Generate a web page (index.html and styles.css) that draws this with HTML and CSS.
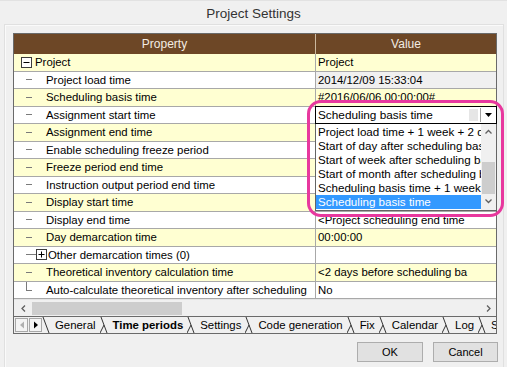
FILE: index.html
```html
<!DOCTYPE html>
<html lang="en">
<head>
    <meta charset="UTF-8">
    <title>Project Settings</title>
    <link rel="stylesheet" href="styles.css">
</head>
<body>
    <div class="titlebar">Project Settings</div>

    <div class="panel">
        <div class="grid">
            <div class="ghead">
                <div>Property</div>
                <div class="gsep">Value</div>
            </div>

            <div class="row alt">
                <div class="prop">
                    <svg class="box" width="11" height="11"><rect x="0.5" y="0.5" width="10" height="10" fill="#fff" stroke="#3c3c3c"/><line x1="2.5" y1="5.5" x2="8.5" y2="5.5" stroke="#000"/></svg>
                    <span>Project</span>
                </div>
                <div class="val">Project</div>
            </div>
            <div class="row">
                <div class="prop"><i class="dash"></i><span>Project load time</span></div>
                <div class="val ro">2014/12/09 15:33:04</div>
            </div>
            <div class="row alt">
                <div class="prop"><i class="dash"></i><span>Scheduling basis time</span></div>
                <div class="val">#2016/06/06 00:00:00#</div>
            </div>
            <div class="row">
                <div class="prop"><i class="dash"></i><span>Assignment start time</span></div>
                <div class="val"></div>
            </div>
            <div class="row alt">
                <div class="prop"><i class="dash"></i><span>Assignment end time</span></div>
                <div class="val"></div>
            </div>
            <div class="row">
                <div class="prop"><i class="dash"></i><span>Enable scheduling freeze period</span></div>
                <div class="val"></div>
            </div>
            <div class="row alt">
                <div class="prop"><i class="dash"></i><span>Freeze period end time</span></div>
                <div class="val"></div>
            </div>
            <div class="row">
                <div class="prop"><i class="dash"></i><span>Instruction output period end time</span></div>
                <div class="val"></div>
            </div>
            <div class="row alt">
                <div class="prop"><i class="dash"></i><span>Display start time</span></div>
                <div class="val"></div>
            </div>
            <div class="row">
                <div class="prop"><i class="dash"></i><span>Display end time</span></div>
                <div class="val">&lt;Project scheduling end time</div>
            </div>
            <div class="row alt">
                <div class="prop"><i class="dash"></i><span>Day demarcation time</span></div>
                <div class="val">00:00:00</div>
            </div>
            <div class="row">
                <div class="prop">
                    <i class="dash long"></i>
                    <svg class="box2" width="11" height="11"><rect x="0.5" y="0.5" width="10" height="10" fill="#fff" stroke="#3c3c3c"/><line x1="2.5" y1="5.5" x2="8.5" y2="5.5" stroke="#000"/><line x1="5.5" y1="2.5" x2="5.5" y2="8.5" stroke="#000"/></svg>
                    <span>Other demarcation times (0)</span>
                </div>
                <div class="val"></div>
            </div>
            <div class="row alt">
                <div class="prop"><i class="dash"></i><span>Theoretical inventory calculation time</span></div>
                <div class="val">&lt;2 days before scheduling ba</div>
            </div>
            <div class="row">
                <div class="prop"><i class="dash last"></i><span>Auto-calculate theoretical inventory after scheduling</span></div>
                <div class="val">No</div>
            </div>

            <div class="hscroll">
                <svg class="arr" width="16" height="15"><polyline points="9,4.5 6,7.5 9,10.5" fill="none" stroke="#606060" stroke-width="1.3"/></svg>
                <div class="thumb"></div>
                <div class="track"></div>
                <svg class="arr" width="16" height="15"><polyline points="7,4.5 10,7.5 7,10.5" fill="none" stroke="#606060" stroke-width="1.3"/></svg>
            </div>

            <div class="tabs">
                <span class="nav"><svg width="12" height="12"><polygon points="8,2.5 4,6 8,9.5" fill="#b0b0b0"/></svg></span>
                <span class="nav"><svg width="12" height="12"><polygon points="4,2.5 8,6 4,9.5" fill="#000"/></svg></span>
                <svg class="sep" width="8" height="16"><line x1="1" y1="0" x2="7" y2="16" stroke="#333"/></svg>
                <span class="tab">General</span>
                <svg class="sep" width="8" height="16"><line x1="1" y1="0" x2="7" y2="16" stroke="#333"/><line x1="0" y1="16" x2="4" y2="8" stroke="#333"/></svg>
                <span class="tab on">Time periods</span>
                <svg class="sep" width="8" height="16"><line x1="1" y1="0" x2="7" y2="16" stroke="#333"/><line x1="0" y1="16" x2="4" y2="8" stroke="#333"/></svg>
                <span class="tab">Settings</span>
                <svg class="sep" width="8" height="16"><line x1="1" y1="0" x2="7" y2="16" stroke="#333"/><line x1="0" y1="16" x2="4" y2="8" stroke="#333"/></svg>
                <span class="tab">Code generation</span>
                <svg class="sep" width="8" height="16"><line x1="1" y1="0" x2="7" y2="16" stroke="#333"/><line x1="0" y1="16" x2="4" y2="8" stroke="#333"/></svg>
                <span class="tab">Fix</span>
                <svg class="sep" width="8" height="16"><line x1="1" y1="0" x2="7" y2="16" stroke="#333"/><line x1="0" y1="16" x2="4" y2="8" stroke="#333"/></svg>
                <span class="tab">Calendar</span>
                <svg class="sep" width="8" height="16"><line x1="1" y1="0" x2="7" y2="16" stroke="#333"/><line x1="0" y1="16" x2="4" y2="8" stroke="#333"/></svg>
                <span class="tab">Log</span>
                <svg class="sep" width="8" height="16"><line x1="1" y1="0" x2="7" y2="16" stroke="#333"/><line x1="0" y1="16" x2="4" y2="8" stroke="#333"/></svg>
                <span class="tab">Scheduling</span>
            </div>
        </div>

        <div class="btns">
            <button class="btn ok">OK</button>
            <button class="btn cancel">Cancel</button>
        </div>
    </div>

    <!-- combo abierto sobre la celda de Assignment start time -->
    <div class="combo">
        <span class="ctext">Scheduling basis time</span>
        <span class="cgap"></span>
        <span class="cbtn"><svg width="7" height="4"><polygon points="0,0 7,0 3.5,4" fill="#000"/></svg></span>
    </div>
    <div class="dlist">
        <div class="items">
            <div class="item">Project load time + 1 week + 2 days</div>
            <div class="item">Start of day after scheduling basis time</div>
            <div class="item">Start of week after scheduling basis time</div>
            <div class="item">Start of month after scheduling basis time</div>
            <div class="item">Scheduling basis time + 1 week</div>
            <div class="item sel">Scheduling basis time</div>
        </div>
        <div class="vscroll">
            <svg width="15" height="16"><polyline points="4.5,9.5 7.5,6.5 10.5,9.5" fill="none" stroke="#606060" stroke-width="1.3"/></svg>
            <div class="vtrack"></div>
            <div class="vthumb"></div>
            <svg width="15" height="14"><polyline points="4.5,5.5 7.5,8.5 10.5,5.5" fill="none" stroke="#606060" stroke-width="1.3"/></svg>
        </div>
    </div>
    <div class="mark"></div>
</body>
</html>
```

FILE: styles.css
```css
/* Estilos generales */
body {
    margin: 0;
    width: 507px;
    height: 367px;
    overflow: hidden;
    position: relative;
    background-color: #f0f0f0;
    font-family: "Liberation Sans", Arial, sans-serif;
    font-size: 11.4px;
    color: #000;
}

.titlebar {
    height: 24px;
    line-height: 26px;
    text-align: center;
    font-size: 13.5px;
    color: #333;
    border-top: 1px solid #e2e2e2;
    box-sizing: border-box;
}

.panel {
    margin-left: 4px;
    width: 500px;
    height: 343px;
    box-sizing: border-box;
    border: 1px solid #e0e0e0;
    border-bottom: none;
    box-shadow: inset 1px 1px 0 #fafafa;
    padding: 8px 0 0 8px;
}

/* Tabla de propiedades */
.grid {
    width: 484px;
    border: 1px solid #6a6a6a;
    box-sizing: border-box;
    background-color: #fff;
}

.ghead {
    display: grid;
    grid-template-columns: 301px 1fr;
    height: 20px;
    line-height: 20px;
    background-color: #6d4726;
    color: #f3ece2;
    text-align: center;
    font-size: 12px;
}

.gsep {
    border-left: 1px solid #cbb89e;
}

.row {
    display: grid;
    grid-template-columns: 301px 1fr;
    height: 17.5px;
}

.row > div {
    border-bottom: 1px solid #a8a8a8;
    white-space: nowrap;
    overflow: hidden;
    line-height: 16.5px;
}

.row.alt {
    background-color: #ffffd2;
}

.row:last-of-type > div {
    border-bottom: none;
}

.prop {
    display: flex;
    align-items: center;
}

.val {
    border-left: 1px solid #a8a8a8;
    padding-left: 2px;
}

.val.ro {
    background-color: #f0f0f0;
}

.box {
    margin: 0 3px 0 7px;
    flex: none;
}

.dash {
    flex: none;
    width: 6px;
    margin: 0 14px 0 12px;
    border-top: 1px solid #7a7a7a;
}

.dash.long {
    width: 10px;
    margin-right: 0;
}

.dash.last {
    align-self: flex-start;
    height: 8px;
    border-top: none;
    border-left: 1px solid #7a7a7a;
    border-bottom: 1px solid #7a7a7a;
    width: 5px;
}

.box2 {
    flex: none;
    margin-right: 1px;
}

/* Barra de desplazamiento horizontal */
.hscroll {
    display: flex;
    align-items: center;
    height: 17px;
    background-color: #f0f0f0;
    border-top: 1px solid #e4e4e4;
    box-sizing: border-box;
}

.hscroll .arr {
    flex: none;
    margin-left: 2px;
}

.thumb {
    width: 150px;
    height: 13px;
    background-color: #cdcdcd;
}

.track {
    flex: 1;
}

/* Pestañas */
.tabs {
    display: flex;
    align-items: center;
    height: 16px;
    border-top: 1px solid #6a6a6a;
    background-color: #f0f0f0;
    white-space: nowrap;
    overflow: hidden;
}

.nav {
    flex: none;
    width: 13px;
    height: 14px;
    margin-left: 1px;
    border: 1px solid #a8a8a8;
    box-sizing: border-box;
    display: flex;
    align-items: center;
    justify-content: center;
    background-color: #f4f4f4;
}

.sep {
    flex: none;
}

.tab {
    padding: 0 4px 0 5px;
    line-height: 15px;
    font-size: 11.4px;
}

.tab.on {
    font-weight: bold;
}

/* Botones */
.btns {
    display: flex;
    justify-content: flex-end;
    gap: 10px;
    margin-top: 8px;
    padding-right: 5px;
}

.btn {
    height: 20px;
    padding: 0;
    border: 1px solid #adadad;
    background-color: #e1e1e1;
    font-family: "Liberation Sans", Arial, sans-serif;
    font-size: 11px;
    color: #000;
}

.btn.ok {
    width: 66px;
}

.btn.cancel {
    width: 65px;
}

/* Lista desplegable */
.combo {
    position: absolute;
    left: 315px;
    top: 106px;
    width: 182px;
    height: 18px;
    box-sizing: border-box;
    border: 1px solid #000;
    background-color: #fff;
    display: flex;
    align-items: center;
}

.ctext {
    flex: 1;
    padding-left: 2px;
    font-size: 11.8px;
}

.cgap {
    width: 9px;
    height: 12px;
    background-color: #e6e6e6;
    margin-right: 2px;
}

.cbtn {
    width: 14px;
    height: 14px;
    border-left: 1px solid #a0a0a0;
    display: flex;
    align-items: center;
    justify-content: center;
    margin-right: 1px;
}

.dlist {
    position: absolute;
    left: 315px;
    top: 124px;
    width: 182px;
    height: 87px;
    box-sizing: border-box;
    border: 1px solid #646464;
    border-top: none;
    background-color: #fff;
    display: flex;
}

.items {
    flex: 1;
    overflow: hidden;
    padding-top: 1px;
}

.item {
    height: 14px;
    line-height: 14px;
    padding-left: 2px;
    white-space: nowrap;
    font-size: 11.6px;
}

.item.sel {
    background-color: #3399ff;
    color: #fff;
}

.vscroll {
    width: 15px;
    flex: none;
    display: flex;
    flex-direction: column;
    background-color: #f0f0f0;
}

.vtrack {
    height: 22px;
}

.vthumb {
    height: 32px;
    margin: 0 1px;
    background-color: #cdcdcd;
}

.mark {
    position: absolute;
    left: 307px;
    top: 100px;
    width: 197px;
    height: 117px;
    box-sizing: border-box;
    border: 3px solid #e8389e;
    border-radius: 14px;
}
```
